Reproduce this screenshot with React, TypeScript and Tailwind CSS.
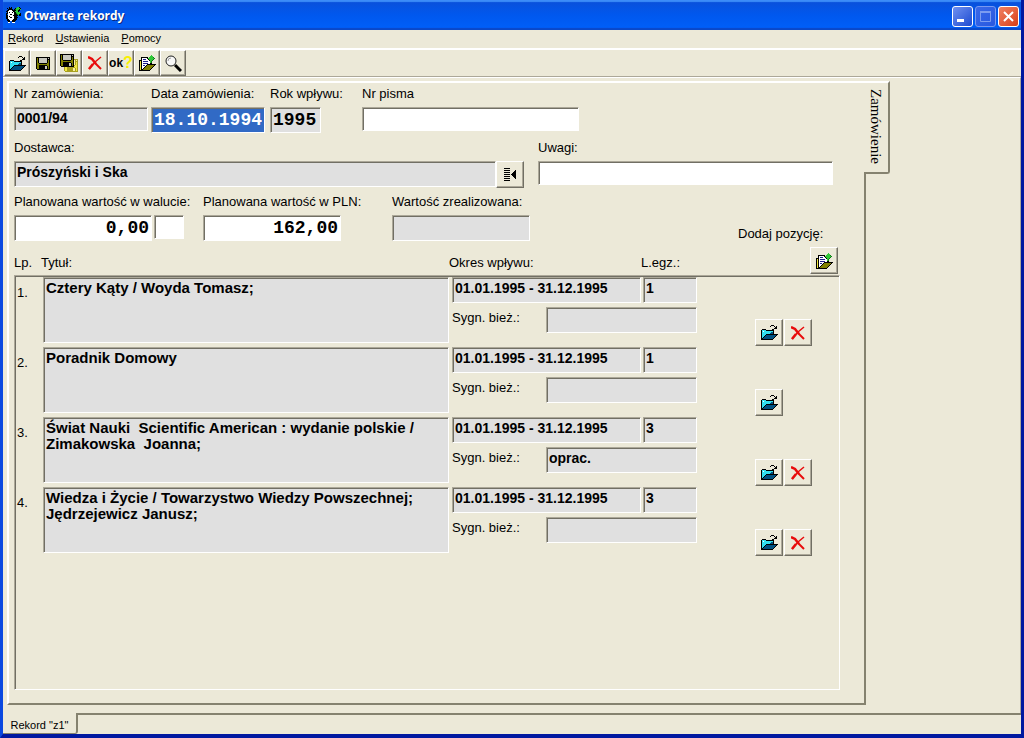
import React from "react";

interface OrderItem {
  id: number;
  title: string;
  period: string;
  copies: string;
  signature: string;
  removable: boolean;
}

const items: OrderItem[] = [
  {
    id: 1,
    title: "Cztery Kąty / Woyda Tomasz;",
    period: "01.01.1995 - 31.12.1995",
    copies: "1",
    signature: "",
    removable: true,
  },
  {
    id: 2,
    title: "Poradnik Domowy",
    period: "01.01.1995 - 31.12.1995",
    copies: "1",
    signature: "",
    removable: false,
  },
  {
    id: 3,
    title: "Świat Nauki  Scientific American : wydanie polskie /\nZimakowska  Joanna;",
    period: "01.01.1995 - 31.12.1995",
    copies: "3",
    signature: "oprac.",
    removable: true,
  },
  {
    id: 4,
    title: "Wiedza i Życie / Towarzystwo Wiedzy Powszechnej;\nJędrzejewicz Janusz;",
    period: "01.01.1995 - 31.12.1995",
    copies: "3",
    signature: "",
    removable: true,
  },
];

const sunken =
  "border border-t-[#aca899] border-l-[#aca899] border-b-white border-r-white shadow-[inset_1px_1px_0_#716f64] outline-none";
const raised =
  "border border-t-white border-l-white border-b-[#716f64] border-r-[#716f64] shadow-[inset_-1px_-1px_0_#aca899]";
const fieldBase = `${sunken} block px-[2px] text-sm font-bold text-black`;
const field = `${fieldBase} h-[26px] pb-1`;
const shortField = `${fieldBase} h-6 pb-[2px]`;
const monoField = `${sunken} block h-[26px] px-[2px] font-['Liberation_Mono',monospace] text-lg font-bold`;

/* ---------- Icons ---------- */

const colors: Record<string, string> = {
  k: "#000000",
  w: "#ffffff",
  c: "#30e0f0",
  b: "#005080",
  o: "#808000",
  g: "#c8c8c0",
  y: "#f0e840",
  n: "#20208c",
  e: "#30c838",
  d: "#107818",
  s: "#808080",
};

interface PixelsProps {
  rows: string[];
  x?: number;
  y?: number;
  palette?: Record<string, string>;
}

const Pixels: React.FC<PixelsProps> = ({ rows, x = 0, y = 0, palette = colors }) => (
  <g>
    {rows.flatMap((row, r) =>
      row
        .split("")
        .map((ch, c) =>
          ch === "." ? null : (
            <rect key={`${r}-${c}`} x={x + c} y={y + r} width="1" height="1" fill={palette[ch]} />
          )
        )
    )}
  </g>
);

const folderRows = [
  "..........kkk....",
  ".........k...k.k.",
  "..............kk.",
  ".............kkk.",
  ".kkkk......kk....",
  "kcccckkkkkkkk....",
  "kcwccccccccck....",
  "kcccccccccbbk....",
  "kccccccccbbbk....",
  "kcccckkkkkkkkkkkk",
  "kccckbbbbbbbbbbk.",
  "kcckbbbbbbbbbbk..",
  "kckbbbbbbbbbbk...",
  "kkbbbbbbbbbbk....",
  "kkkkkkkkkkkk.....",
];

const floppyRows = [
  "kkkkkkkkkkkkkk",
  "kokggggggggkgk",
  "kokggggggggkkk",
  "kokggggggggkok",
  "kokggggggggkok",
  "kokggggggggkok",
  "kookkkkkkkkook",
  "kooooooooooook",
  "kookkkkkkkkook",
  "kookkkkkkggkok",
  "kookkkkkkggkok",
  "kookkkkkkggkok",
  ".kkkkkkkkkkkkk",
];

const addRows = [
  "............e....",
  "...........eee...",
  "..kkkkkkk.eeeed..",
  "..kwwwwwkeeeeeed.",
  "..kwnnnwwkeeeed..",
  "kkkwwwwwwwkeed...",
  "kykwnnnnnwwed....",
  "kykwwwwwwwwed....",
  "kykwnnnnnwwkk....",
  "kykwwwwwkkkkkkkkk",
  "kykwnnwkoooooook.",
  "kykwwwkoooooook..",
  "kykwwkoooooook...",
  "kykwkoooooook....",
  "kykkoooooook.....",
  "kkkkkkkkkkk......",
];

const appRows = [
  "...k.k.....eek..",
  ".k.kkk...keeeek.",
  "..kkkkk.kdeeeke.",
  ".kkwwwkkkkeekk..",
  "kkwwwwwkkeeek...",
  ".kwkwwkwkkeeee..",
  "kkwwwwwwkkdeeek.",
  "k.wwkkwwkkkdekk.",
  "kkwwwwwkkkkk.kk.",
  "kkwkwwwwkkk.....",
  "kkwwkkwwkkkk....",
  "kkwwwwwwkkk.....",
  ".kkwwwwkkkk.....",
  ".kkkwwkkkk......",
  "..kk..kkk.......",
  "..ww..www.......",
];

const yellow = { k: "#a8a020", o: "#f0e840", g: "#f8f0a0" };

const FolderIcon = () => (
  <svg width="17" height="15" viewBox="0 0 17 15" shapeRendering="crispEdges">
    <Pixels rows={folderRows} />
  </svg>
);

const SaveIcon = () => (
  <svg width="14" height="13" viewBox="0 0 14 13" shapeRendering="crispEdges">
    <Pixels rows={floppyRows} />
  </svg>
);

const SaveAllIcon = () => (
  <svg width="18" height="18" viewBox="0 0 18 18" shapeRendering="crispEdges">
    <Pixels rows={floppyRows} x={4} y={5} palette={yellow} />
    <Pixels rows={floppyRows} />
  </svg>
);

const AddIcon = () => (
  <svg width="17" height="16" viewBox="0 0 17 16" shapeRendering="crispEdges">
    <Pixels rows={addRows} />
  </svg>
);

const DeleteIcon = () => (
  <svg width="14" height="14" viewBox="0 0 14 14" fill="none" stroke="#e80c0c">
    <path d="M0 1 L4 3 L8 8" strokeWidth="2.500" />
    <path d="M7 7 L13 13" strokeWidth="2" />
    <path d="M13 1 L7 6 L1 13" strokeWidth="1.500" />
    <path d="M1 13 L5 8" strokeWidth="2.500" />
  </svg>
);

const SearchIcon = () => (
  <svg width="17" height="17" viewBox="0 0 17 17" fill="none">
    <circle cx="6" cy="6" r="5" fill="#f8f8f8" stroke="#202020" />
    <path d="M3 6 A3 3 0 0 1 6 3" stroke="#a0a0a0" />
    <path d="M10 10 L16 16" stroke="#000" strokeWidth="3" />
  </svg>
);

const ListIcon = () => (
  <svg width="13" height="13" viewBox="0 0 13 13" fill="#000" shapeRendering="crispEdges">
    <path d="M0 0h6v1H0zM0 2h6v1H0zM0 4h6v1H0zM0 6h6v1H0zM0 8h6v1H0zM0 10h6v1H0zM0 12h6v1H0z" />
    <path d="M7 6h1V5h1V4h1V3h1V2h1v9h-1v-1h-1V9H9V8H8V7H7z" />
  </svg>
);

/* ---------- Controls ---------- */

interface IconButtonProps {
  label: string;
  className?: string;
  children: React.ReactNode;
}

const IconButton: React.FC<IconButtonProps> = ({ label, className = "h-[27px] w-7", children }) => (
  <button
    type="button"
    aria-label={label}
    className={`${raised} flex shrink-0 items-center justify-center bg-[#ece9d8] ${className}`}
  >
    {children}
  </button>
);

interface LabeledProps {
  id: string;
  label: string;
  className: string;
  children: React.ReactNode;
}

const Labeled: React.FC<LabeledProps> = ({ id, label, className, children }) => (
  <div className={className}>
    <label htmlFor={id} className="mb-[5px] block leading-4 whitespace-nowrap">
      {label}
    </label>
    {children}
  </div>
);

const TitleBar = () => (
  <header className="flex h-[30px] shrink-0 items-center bg-linear-to-b from-[#0a4fd8] via-[#0058ee] to-[#0060fa] pr-[2px] pl-[3px] shadow-[inset_0_2px_1px_#3c8cf8,inset_0_-2px_1px_#0a48c8]">
    <svg width="16" height="16" viewBox="0 0 16 16" shapeRendering="crispEdges">
      <Pixels rows={appRows} />
    </svg>
    <h1 className="flex-1 pt-[2px] pl-[2px] font-['Open_Sans',sans-serif] text-xs font-bold text-white [text-shadow:1px_1px_#0a2a80]">
      Otwarte rekordy
    </h1>
    <div className="flex gap-[2px] pt-[2px]">
      <button
        type="button"
        aria-label="Minimalizuj"
        className="h-[21px] w-[21px] rounded-[3px] border border-white bg-linear-to-br from-[#7090f0] to-[#1c48d0]"
      >
        <svg width="19" height="19" viewBox="0 0 19 19">
          <path d="M4 12h7v3H4z" fill="#fff" />
        </svg>
      </button>
      <button
        type="button"
        aria-label="Maksymalizuj"
        disabled
        className="h-[21px] w-[21px] rounded-[3px] border border-[#7898f0] bg-linear-to-br from-[#3a68e8] to-[#2858e0]"
      >
        <svg width="19" height="19" viewBox="0 0 19 19" fill="none" stroke="#7c9cf0">
          <path d="M4.500 5.500h10v9h-10z" />
          <path d="M4 5h11" strokeWidth="2" />
        </svg>
      </button>
      <button
        type="button"
        aria-label="Zamknij"
        className="h-[21px] w-[21px] rounded-[3px] border border-white bg-linear-to-br from-[#f08060] to-[#d83c10]"
      >
        <svg width="19" height="19" viewBox="0 0 19 19" stroke="#fff" strokeWidth="2">
          <path d="M5 5l9 9M14 5l-9 9" />
        </svg>
      </button>
    </div>
  </header>
);

const MenuBar = () => (
  <nav className="flex h-[18px] shrink-0 items-center gap-3 pb-px pl-[5px] text-[11px]">
    {["Rekord", "Ustawienia", "Pomocy"].map((name) => (
      <button key={name} type="button">
        <span className="underline">{name[0]}</span>
        {name.slice(1)}
      </button>
    ))}
  </nav>
);

const Toolbar = () => {
  const size = "h-[26px] w-[26px]";
  return (
    <div className="flex h-[29px] shrink-0 border-t-2 border-b border-t-white border-b-[#aca899] pl-[1px]">
      <IconButton label="Otwórz" className={size}>
        <FolderIcon />
      </IconButton>
      <IconButton label="Zapisz" className={size}>
        <SaveIcon />
      </IconButton>
      <IconButton label="Zapisz wszystko" className={size}>
        <SaveAllIcon />
      </IconButton>
      <IconButton label="Usuń" className={size}>
        <DeleteIcon />
      </IconButton>
      <IconButton label="Sprawdź" className={size}>
        <span className="text-xs font-bold">ok</span>
        <span className="text-base font-bold text-[#f8f000]">?</span>
      </IconButton>
      <IconButton label="Dodaj" className={size}>
        <AddIcon />
      </IconButton>
      <IconButton label="Szukaj" className={size}>
        <SearchIcon />
      </IconButton>
    </div>
  );
};

const ItemRow: React.FC<{ item: OrderItem }> = ({ item }) => (
  <li className="flex h-[70px]">
    <span className="w-[27px] shrink-0 pt-2 pl-px leading-4">{item.id}.</span>
    <textarea
      aria-label={`Tytuł ${item.id}`}
      readOnly
      defaultValue={item.title}
      className={`${sunken} h-[66px] min-w-0 flex-1 resize-none overflow-hidden bg-[#e0e0e0] px-[2px] pt-[2px] text-[15px] leading-4 font-bold`}
    />
    <div className="ml-[3px] w-[245px] shrink-0">
      <div className="flex gap-[2px]">
        <input
          aria-label={`Okres wpływu ${item.id}`}
          readOnly
          defaultValue={item.period}
          className={`${field} w-[189px] bg-[#e0e0e0]`}
        />
        <input
          aria-label={`L.egz. ${item.id}`}
          readOnly
          defaultValue={item.copies}
          className={`${field} w-[54px] bg-[#e0e0e0]`}
        />
      </div>
      <div className="mt-1 flex">
        <label htmlFor={`sygn-${item.id}`} className="w-[94px] pt-[3px] leading-4">
          Sygn. bież.:
        </label>
        <input
          id={`sygn-${item.id}`}
          readOnly
          defaultValue={item.signature}
          className={`${field} w-[151px] bg-[#e0e0e0]`}
        />
      </div>
    </div>
    <div className="mt-[42px] ml-[58px] flex w-[84px] shrink-0 gap-px">
      <IconButton label={`Otwórz pozycję ${item.id}`}>
        <FolderIcon />
      </IconButton>
      {item.removable && (
        <IconButton label={`Usuń pozycję ${item.id}`}>
          <DeleteIcon />
        </IconButton>
      )}
    </div>
  </li>
);

const OrderForm = () => (
  <form className="flex min-w-0 flex-1 flex-col border-t-2 border-b-2 border-l-2 border-t-white border-b-[#85826f] border-l-white pt-[3px] pr-6 pb-[13px] pl-[5px]">
    <div className="flex h-[54px]">
      <Labeled id="number" label="Nr zamówienia:" className="mr-[3px] w-[134px]">
        <input
          id="number"
          readOnly
          defaultValue="0001/94"
          className={`${shortField} w-full bg-[#e0e0e0]`}
        />
      </Labeled>
      <Labeled id="date" label="Data zamówienia:" className="mr-[5px] w-[114px]">
        <input
          id="date"
          defaultValue="18.10.1994"
          className={`${monoField} w-full bg-[#316ac5] text-white`}
        />
      </Labeled>
      <Labeled id="year" label="Rok wpływu:" className="mr-[41px] w-[51px]">
        <input id="year" readOnly defaultValue="1995" className={`${monoField} w-full bg-[#e0e0e0]`} />
      </Labeled>
      <Labeled id="letter" label="Nr pisma" className="w-[217px]">
        <input id="letter" className={`${shortField} w-full bg-white`} />
      </Labeled>
    </div>

    <div className="flex h-[54px]">
      <Labeled id="supplier" label="Dostawca:" className="w-[510px]">
        <div className="flex">
          <input
            id="supplier"
            readOnly
            defaultValue="Prószyński i Ska"
            className={`${field} flex-1 bg-[#e0e0e0]`}
          />
          <IconButton label="Wybierz dostawcę">
            <ListIcon />
          </IconButton>
        </div>
      </Labeled>
      <Labeled id="notes" label="Uwagi:" className="mr-[7px] ml-[14px] flex-1">
        <input id="notes" className={`${shortField} w-full bg-white`} />
      </Labeled>
    </div>

    <div className="flex">
      <div className="flex min-w-0 flex-1 flex-col">
        <div className="flex">
          <Labeled id="value-currency" label="Planowana wartość w walucie:" className="mr-[19px] w-[170px]">
            <div className="flex gap-[2px]">
              <input
                id="value-currency"
                defaultValue="0,00"
                className={`${monoField} w-[138px] bg-white text-right`}
              />
              <input aria-label="Waluta" className={`${shortField} w-[30px] bg-white`} />
            </div>
          </Labeled>
          <Labeled id="value-pln" label="Planowana wartość w PLN:" className="mr-[51px] w-[138px]">
            <input
              id="value-pln"
              defaultValue="162,00"
              className={`${monoField} w-full bg-white text-right`}
            />
          </Labeled>
          <Labeled id="value-done" label="Wartość zrealizowana:" className="w-[138px]">
            <input id="value-done" readOnly className={`${monoField} w-full bg-[#e0e0e0]`} />
          </Labeled>
        </div>
        <div className="mt-[14px] mb-1 flex leading-4">
          <span className="w-[27px]">Lp.</span>
          <span className="flex-1">Tytuł:</span>
          <span className="w-48">Okres wpływu:</span>
          <span className="w-[97px]">L.egz.:</span>
        </div>
      </div>
      <div className="flex w-[102px] shrink-0 flex-col justify-end pb-px">
        <span className="mb-[5px] leading-4">Dodaj pozycję:</span>
        <div className="flex justify-end pr-[2px]">
          <IconButton label="Dodaj pozycję">
            <AddIcon />
          </IconButton>
        </div>
      </div>
    </div>

    <ul className={`${sunken} min-h-[300px] flex-1 pt-px pl-px`}>
      {items.map((item) => (
        <ItemRow key={item.id} item={item} />
      ))}
    </ul>
  </form>
);

const App = () => (
  <div className="flex min-h-screen flex-col border-x-[3px] border-b-4 border-r-[#0018a0] border-b-[#0018a0] border-l-[#0a48e0] bg-[#ece9d8] font-['Liberation_Sans',Arial,sans-serif] text-[13px] text-black">
    <TitleBar />
    <MenuBar />
    <Toolbar />
    <main className="flex flex-1 border-t border-r border-t-white border-r-[#aca899] pt-[3px] pb-2 pl-1">
      <OrderForm />
      <div className="mr-[130px] flex w-[26px] shrink-0 flex-col">
        <button
          type="button"
          className="flex h-[93px] items-center justify-start rounded-br-[3px] border-t-2 border-r-2 border-b-2 border-t-white border-r-[#85826f] border-b-[#85826f] pt-[6px] font-['Liberation_Serif',serif] text-[15px] leading-6 [writing-mode:vertical-rl]"
        >
          Zamówienie
        </button>
        <div className="flex-1 border-l-2 border-l-[#85826f]" />
      </div>
    </main>
    <footer className="flex h-[21px] shrink-0">
      <button
        type="button"
        className="h-full w-[75px] rounded-br-[3px] border-r-2 border-b border-r-[#85826f] border-b-[#85826f] pt-1 text-[11px]"
      >
        Rekord "z1"
      </button>
      <div className="flex-1 border-t-2 border-t-[#85826f]" />
    </footer>
  </div>
);

export default App;
